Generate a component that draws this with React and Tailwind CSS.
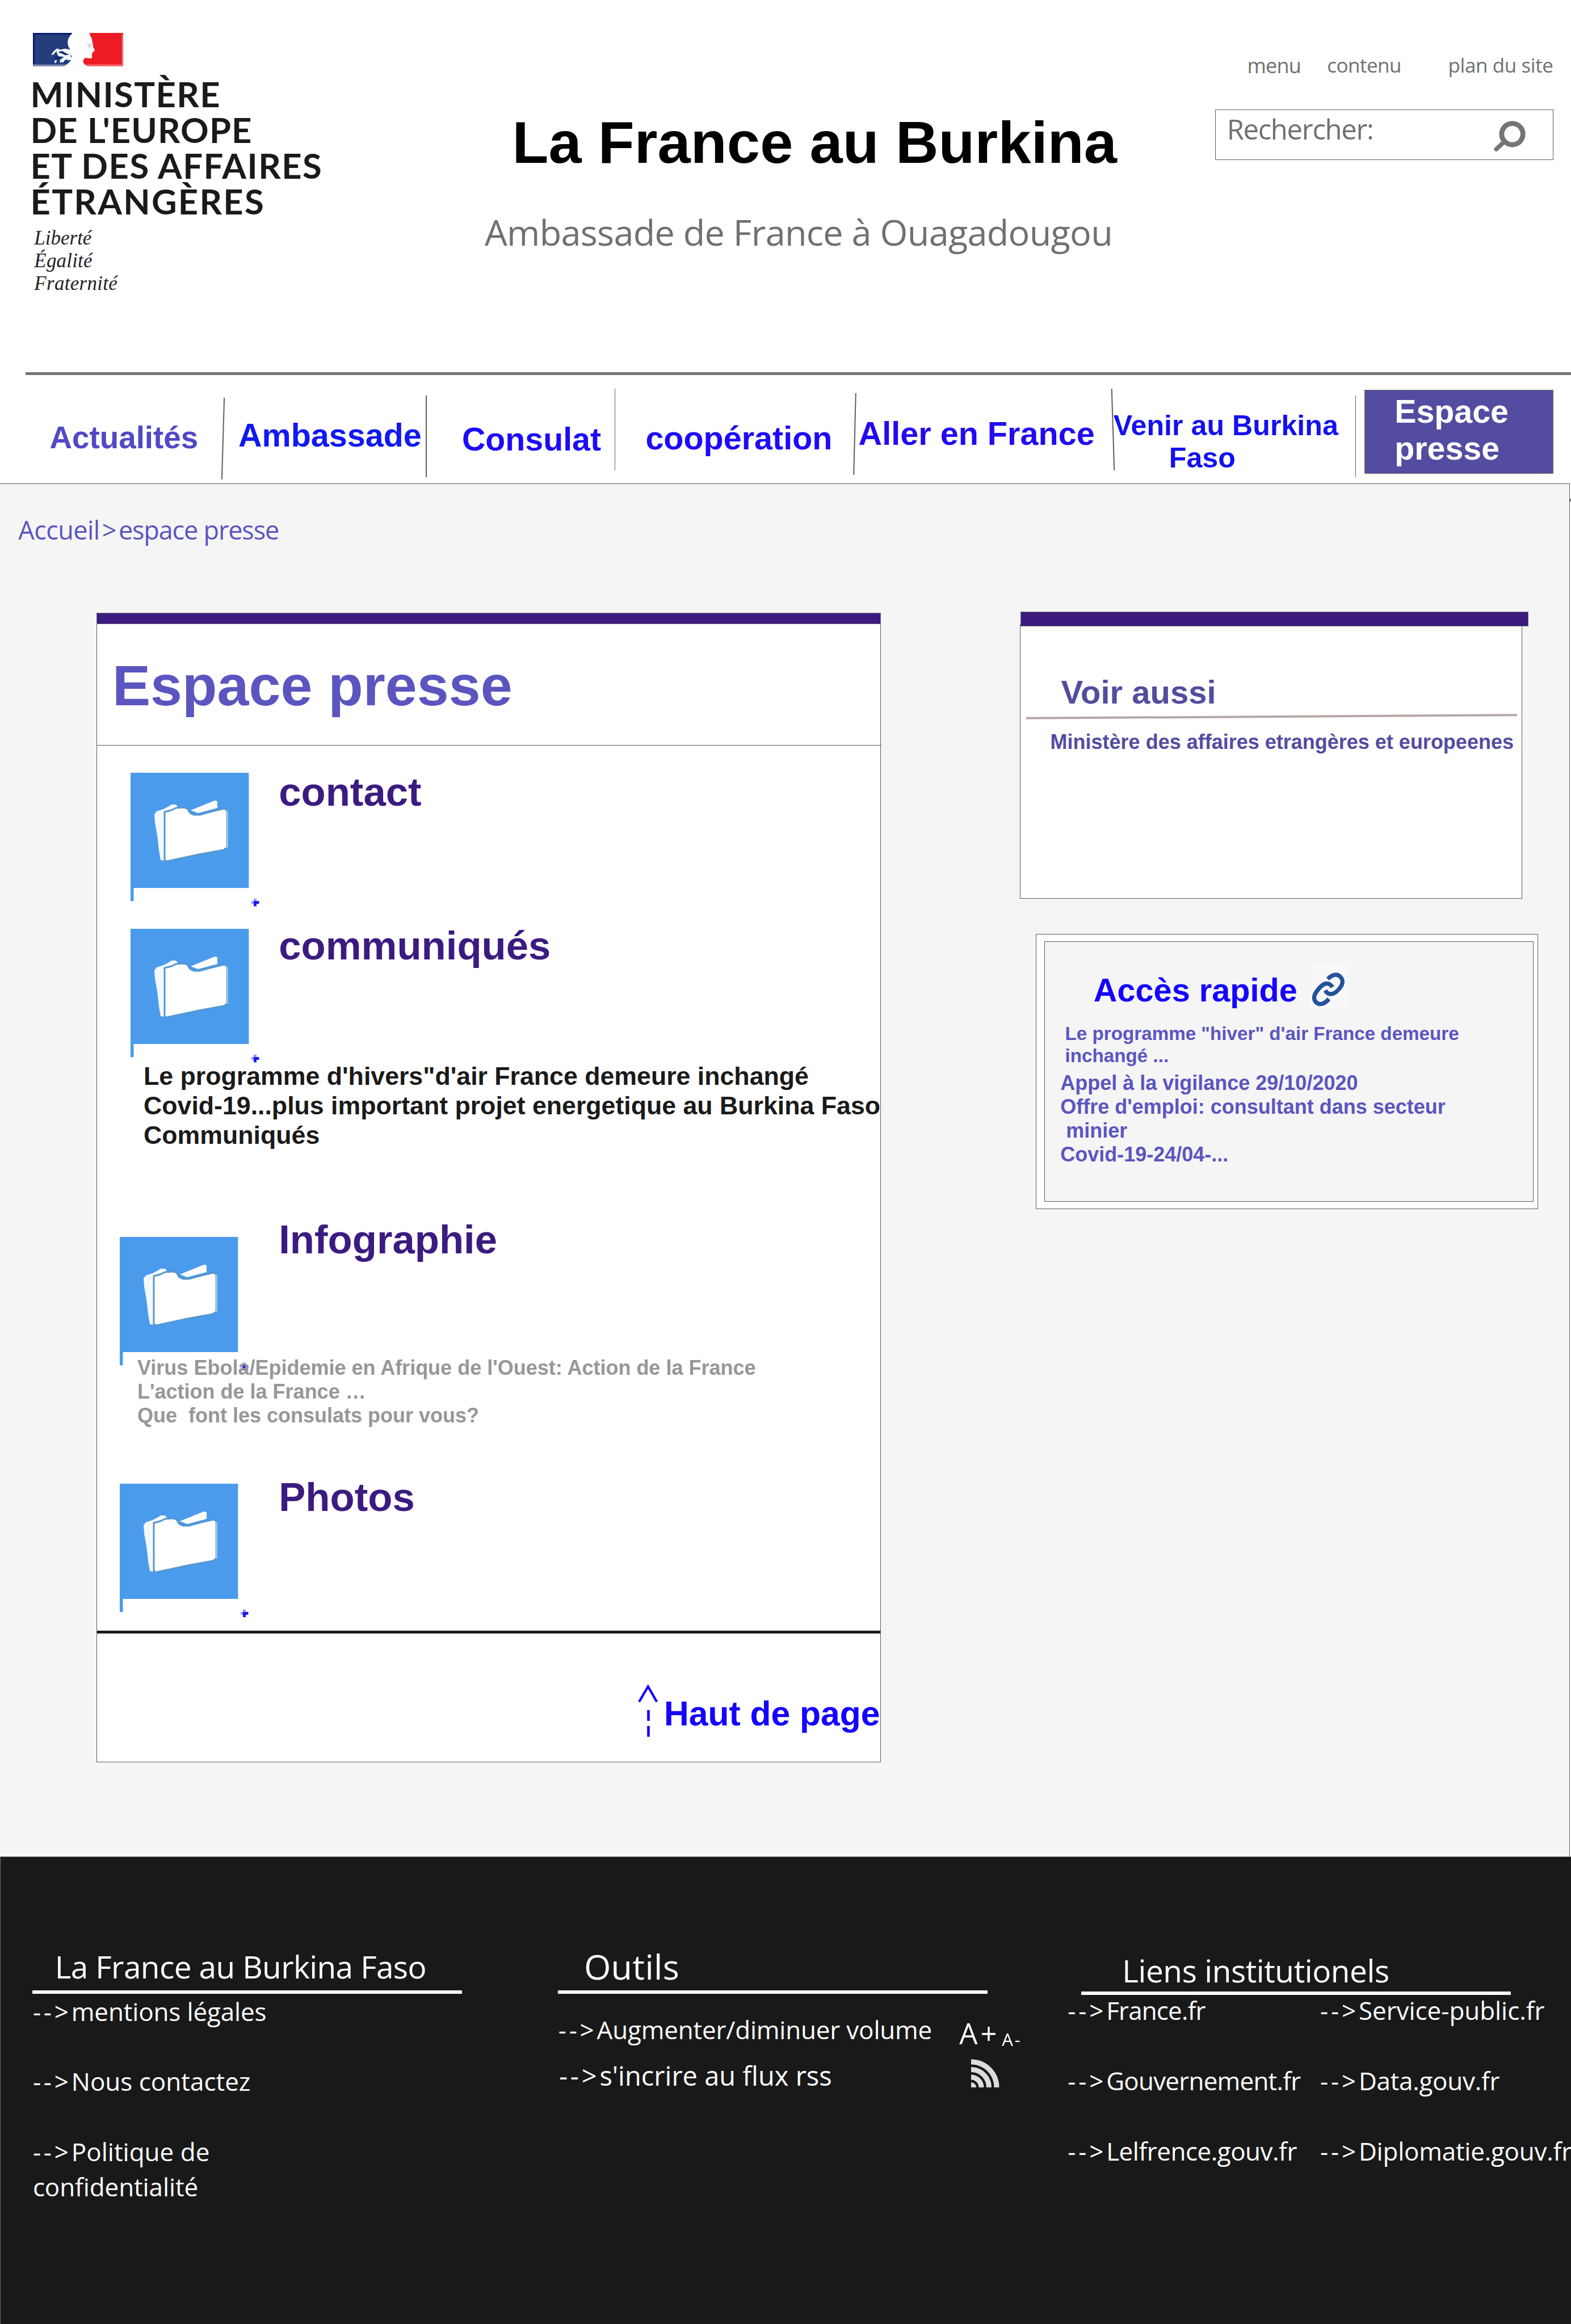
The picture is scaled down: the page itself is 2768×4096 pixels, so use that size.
import React from "react";

const SANS = "font-['Liberation_Sans',Arial,sans-serif] font-bold";
const UI = "font-['Open_Sans','Noto_Sans',sans-serif]";

function FlagLogo() {
  return (
    <svg className="block w-[159px] h-[58.4px]" viewBox="63 63 663 243" preserveAspectRatio="none">
      <path d="M63 63H352L336 84L322 108L318 130L322 160L334 180L340 215L352 245L340 268L318 290L292 306H63Z" fill="#253c7d" />
      <path d="M63 63H352L346 74H75V294H63Z" fill="#001d70" />
      <path d="M75 294H308L292 306H63V294Z" fill="#7a83ab" />
      <path d="M196 224L214 198L240 176L262 186L300 178L340 186L342 240L366 244L340 264L314 262L294 284L272 276L262 286L262 262L290 240L252 236L240 214L236 196L214 222Z" fill="#f2f3f7" />
      <path d="M256 200L280 196L300 210L330 222L300 226L276 214L252 208Z" fill="#0d2a78" />
      <path d="M222 240L256 236L290 238L256 250L240 262L224 256Z" fill="#0d2a78" />
      <path d="M226 262L240 262L232 284L220 284Z" fill="#e5e6ef" />
      <path d="M300 262L318 258L296 284L284 280Z" fill="#0d2a78" />
      <path d="M478 63H726V306H464L438 290L431 268L444 246L495 250L498 212L518 190L506 165L500 130L494 100L484 84Z" fill="#ed1c24" />
      <path d="M716 75H726V306H464L454 294H716Z" fill="#f5666b" />
      <path d="M462 144H494V158H484V172H472V156H462Z" fill="#cfcfcf" />
    </svg>
  );
}

function SearchIcon() {
  return (
    <svg className="block w-[60px] h-[60px]" viewBox="0 0 60 60">
      <circle cx="34.6" cy="26.3" r="18.7" fill="none" stroke="#757575" strokeWidth="8.8" />
      <path d="M20.5 39.5L6.3 53" stroke="#757575" strokeWidth="7.6" strokeLinecap="round" />
    </svg>
  );
}

function FolderIcon() {
  return (
    <svg className="block shrink-0 w-[228px] h-[236px]" viewBox="0 0 228 236">
      <path d="M0 0H208.4V203H5.5V226.2H0Z" fill="#4a9bec" />
      <path d="M42 73L46 68L58 64L66 60L72 56L80 56L84 61L60 68L60 155L53 154L50 136L47 110L43 88Z" fill="#f4f9fe" />
      <path d="M106 66L126 58L148 49L153 50L153 62L119 71Z" fill="#fff" />
      <path d="M60 69L72 66L80 62L94 61L100 63L105 71L112 74L122 74L140 69L165 63L170 66L170 132L164 136L120 144L64 156L60 154Z" fill="#fff" stroke="#5597cf" strokeWidth="3" strokeLinejoin="round" />
      <path d="M170.5 67V132" stroke="#a9cbea" strokeWidth="2.5" />
      <path d="M213 226h14v5h-14zM217 221.500h5v14h-5z" fill="#9c9cfa" />
      <path d="M217 226h9v5h-4v4h-5z" fill="#1a1af5" />
    </svg>
  );
}

function LinkIcon() {
  return (
    <svg className="block w-[66px] h-[79px] bg-[#f8f8f8]" viewBox="0 0 66 79">
      <g fill="none" stroke="#24529a" strokeWidth="7.4">
        <path d="M30.5 26.5C38 18.5 46 17 51.5 21.5C58 27 57.5 35 52 42C45 51 40 53 36 53C31.5 53 28.500 51 26 46.500" />
        <path d="M38.500 41C36 36 31.500 34 27 34.500C21 35.500 16 41 10 49.500C5 57 5.500 64 10.500 68C16 72.500 24 71.500 32.500 61.500" />
      </g>
    </svg>
  );
}

function RssIcon() {
  return (
    <svg className="block w-[50px] h-[50px]" viewBox="0 0 50 50">
      <g fill="none" stroke="#dcdcdc" strokeWidth="9">
        <path d="M0 5A45 45 0 0 1 45 50" />
        <path d="M0 18.500A31.500 31.500 0 0 1 31.500 50" />
        <path d="M0 32A18 18 0 0 1 18 50" />
      </g>
      <path d="M0 41A9 9 0 0 1 9 50H0Z" fill="#dcdcdc" />
    </svg>
  );
}

function UpArrow() {
  return (
    <svg className="block w-[38px] h-[92px]" viewBox="0 0 38 92">
      <path d="M4 30.500L19.800 3.500L35.300 30.500" fill="none" stroke="#1400ff" strokeWidth="4.200" />
      <path d="M20.500 45V64M20.500 73V92" stroke="#1400ff" strokeWidth="4.600" />
    </svg>
  );
}

const NAV = [
  { label: "Actualités", cell: "w-[392px] pl-[87.4px] pt-[77.6px] text-[54.8px] text-[#5049c6]", line: "mt-[40px] -skew-x-[1.7deg]" },
  { label: "Ambassade", cell: "w-[356.6px] pl-[26.5px] pt-[73.3px] text-[57.5px] text-[#1119f2]", line: "mt-[36px]" },
  { label: "Consulat", cell: "w-[331px] pl-[62.3px] pt-[80.5px] text-[57.3px] text-[#1c0af8]", line: "mt-[24px]" },
  { label: "coopération", cell: "w-[421px] pl-[53.3px] pt-[79px] text-[57.5px] text-[#1c0af8]", line: "mt-[31.6px] -skew-x-[1.43deg]" },
  { label: "Aller en France", cell: "w-[453.7px] pl-[6px] pt-[70.5px] text-[57.6px] text-[#220af0]", line: "mt-[24px] skew-x-[1.8deg]" },
];

function Header() {
  return (
    <header className="h-[852px] shrink-0 flex flex-col bg-white">
      <div className="h-[656.4px] shrink-0 flex">
        <div className="w-[854px] shrink-0 pl-[58.3px] pt-[58.4px]">
          <FlagLogo />
          <div className="mt-[17.5px] -ml-[4.8px] font-['Lato',sans-serif] font-bold text-[61.5px] leading-[62.8px] text-[#1c191a] whitespace-nowrap">
            <div className="tracking-[1.4px]">MINISTÈRE</div>
            <div className="tracking-[1.1px]">DE L'EUROPE</div>
            <div className="tracking-[1.5px]">ET DES AFFAIRES</div>
            <div className="tracking-[2.3px]">ÉTRANGÈRES</div>
          </div>
          <div className="mt-[15px] ml-[2px] font-['Liberation_Serif',serif] italic text-[35px] leading-[40px] text-[#222]">
            <div>Liberté</div>
            <div className="tracking-[0.2px]">Égalité</div>
            <div className="tracking-[0.3px]">Fraternité</div>
          </div>
        </div>
        <div className="w-[1286.5px] shrink-0 pt-[191px] whitespace-nowrap">
          <h1 className={`${SANS} ml-[48.4px] text-[104.6px] leading-[120px] tracking-[0.1px] text-black`}>La France au Burkina</h1>
          <p className={`${UI} mt-[57.6px] text-[63px] leading-[80px] tracking-[-0.73px] text-[#707070]`}>Ambassade de France à Ouagadougou</p>
        </div>
        <div className={`${UI} w-[596px] shrink-0 pt-[90.8px] text-[#707070] whitespace-nowrap`}>
          <div className="flex h-[48px] pl-[57px] text-[35px] leading-[48px]">
            <span className="w-[141px] pt-[1.4px] text-[36px] tracking-[-0.77px]">menu</span>
            <span className="w-[213.4px] tracking-[-0.56px]">contenu</span>
            <span className="tracking-[-0.41px]">plan du site</span>
          </div>
          <div className="mt-[54.1px] h-[89px] border border-[#5c5c5c] flex justify-between pl-[20.2px] pr-[46px]">
            <span className="pt-[3.4px] text-[49px] leading-[60px] tracking-[-1.35px]">Rechercher:</span>
            <span className="pt-[16px]"><SearchIcon /></span>
          </div>
        </div>
      </div>
      <div className="ml-[45.3px] h-[5px] shrink-0 bg-[#757575]" />
      <nav className={`${SANS} flex flex-1 leading-[65px] whitespace-nowrap`}>
        {NAV.map((n) => (
          <React.Fragment key={n.label}>
            <a className={`shrink-0 ${n.cell}`}>{n.label}</a>
            <span className={`shrink-0 w-[1.5px] h-[144px] bg-[#606060] ${n.line}`} />
          </React.Fragment>
        ))}
        <a className="shrink-0 w-[426px] pt-[60.2px] text-[50.2px] leading-[57.5px] text-[#1410f0]">
          Venir au Burkina
          <span className="block pl-[98px]">Faso</span>
        </a>
        <span className="shrink-0 w-[1.5px] h-[144px] mt-[36px] bg-[#606060]" />
        <a className="shrink-0 ml-[14.4px] mt-[25.2px] w-[333px] h-[148.2px] pl-[52.6px] pt-[5px] border border-[#707070] bg-[#534ca0] text-white text-[57.3px]">
          Espace
          <br />
          presse
        </a>
      </nav>
    </header>
  );
}

function Section({ title, className, iconClass, titleClass }) {
  return (
    <div className={`flex ${className}`}>
      <div className={`w-[320.2px] shrink-0 ${iconClass}`}><FolderIcon /></div>
      <h2 className={`text-[70.7px] leading-[80px] text-[#3b1b80] ${titleClass}`}>{title}</h2>
    </div>
  );
}

function PressCard() {
  return (
    <section className={`${SANS} shrink-0 mt-[1.3px] ml-[170px] w-[1382px] h-[2026.5px] border border-t-0 border-[#5c5c5c] bg-white whitespace-nowrap`}>
      <div className="-ml-px -mr-px h-[20px] border border-[#707070] bg-[#3b1b80]" />
      <div className="h-[214px] -mr-[2px] border-b border-[#5c5c5c] pl-[27px] pt-[48.3px]">
        <h1 className="text-[100.6px] leading-[120px] text-[#5b55c0]">Espace presse</h1>
      </div>
      <Section title="contact" className="h-[300.300px]" iconClass="pl-[58.8px] pt-[48.8px]" titleClass="pt-[42.7px]" />
      <Section title="communiqués" className="h-[257.2px]" iconClass="pl-[58.8px] pt-[23.5px]" titleClass="pt-[13px]" />
      <div className="pl-[82px] text-[44.7px] leading-[51.7px] tracking-[-0.01px] text-[#1a1a1a]">
        <p>Le programme d'hivers"d'air France demeure inchangé</p>
        <p>Covid-19...plus important projet energetique au Burkina Faso</p>
        <p>Communiqués</p>
      </div>
      <Section title="Infographie" className="h-[364.1px]" iconClass="pl-[39.9px] pt-[153.9px]" titleClass="pt-[118.8px]" />
      <div className="relative pl-[71px] text-[36px] leading-[42px] text-[#979797] whitespace-pre">
        <p>Virus Ebola/Epidemie en Afrique de l'Ouest: Action de la France</p>
        <p>L'action de la France …</p>
        <p>Que  font les consulats pour vous?</p>
      </div>
      <Section title="Photos" className="h-[357.8px]" iconClass="pl-[39.9px] pt-[98.2px]" titleClass="pt-[82.4px]" />
      <div className="h-[4.6px] bg-[#1a1a1a]" />
      <div className="flex pl-[950.500px] text-[60.6px] leading-[70px] text-[#1400ff]">
        <span className="pt-[90px] w-[48.500px]"><UpArrow /></span>
        <a className="pt-[106px]">Haut de page</a>
      </div>
    </section>
  );
}

function Sidebar() {
  return (
    <aside className={`${SANS} shrink-0 ml-[244.6px] w-[920px] whitespace-nowrap`}>
      <div className="relative z-10 ml-[1.3px] w-[895.2px] h-[25.4px] border border-[#707070] bg-[#3b1b80]" />
      <section className="-mt-[3.8px] w-[885px] h-[484.4px] border border-[#5c5c5c] bg-white pt-[84.5px] text-[#534ca0]">
        <h2 className="pl-[72px] text-[58px] leading-[70px]">Voir aussi</h2>
        <div className="mt-[5.3px] ml-[10px] w-[865px] h-[4px] bg-[#b5a8a8] -rotate-[0.38deg]" />
        <p className="mt-[22px] ml-[53px] text-[36px] leading-[42px]">Ministère des affaires etrangères et europeenes</p>
      </section>
      <section className="mt-[61.700px] ml-[28.9px] w-[885px] h-[485px] border border-[#5c5c5c] bg-white pl-[13.1px] pt-[11.8px] text-[#5b55c0]">
        <div className="w-[862.5px] h-[459.4px] border border-[#5c5c5c] bg-[#f5f5f5] pt-[39.2px]">
          <div className="flex pl-[86.2px]">
            <h2 className="w-[382.500px] pt-[11.4px] text-[57.7px] leading-[70px] text-[#1400ff]">Accès rapide</h2>
            <LinkIcon />
          </div>
          <p className="mt-[22.500px] ml-[36px] text-[33.2px] leading-[38.9px]">
            Le programme "hiver" d'air France demeure
            <br />
            inchangé ...
          </p>
          <div className="mt-[7.7px] ml-[27.6px] text-[36px] leading-[42px]">
            <p>Appel à la vigilance 29/10/2020</p>
            <p>Offre d'emploi: consultant dans secteur</p>
            <p className="pl-[10px]">minier</p>
            <p>Covid-19-24/04-...</p>
          </div>
        </div>
      </section>
    </aside>
  );
}

function FooterLink({ children, className = "" }) {
  return (
    <a className={`block ${className}`}>
      <span className="tracking-[4.8px]">--&gt;</span>
      {children}
    </a>
  );
}

function Footer() {
  return (
    <footer className={`${UI} flex-1 flex border-t border-l border-[#707070] bg-[#191919] pt-[158.6px] text-[44px] text-white whitespace-nowrap overflow-hidden`}>
      <div className="shrink-0 ml-[55.7px] w-[926.2px]">
        <h3 className="pl-[40px] text-[55px] leading-[70px] tracking-[-0.64px]">La France au Burkina Faso</h3>
        <div className="mt-[6.4px] w-[757px] h-[6px] bg-white" />
        <div className="mt-[1.6px] pl-[1.2px] leading-[61.8px]">
          <FooterLink className="mb-[61.400px] tracking-[-0.15px]">mentions légales</FooterLink>
          <FooterLink className="mb-[61.900px]">Nous contactez</FooterLink>
          <FooterLink>Politique de</FooterLink>
          <span className="tracking-[-0.11px]">confidentialité</span>
        </div>
      </div>
      <div className="shrink-0 w-[898.4px]">
        <h3 className="pl-[46px] text-[61px] leading-[70px] tracking-[0.3px]">Outils</h3>
        <div className="mt-[6.4px] w-[757px] h-[6px] bg-white" />
        <div className="flex h-[114px] pl-[0.8px] leading-[60px]">
          <FooterLink className="w-[706.500px] pt-[33.2px] tracking-[-0.2px]">Augmenter/diminuer volume</FooterLink>
          <span className="w-[75px] pt-[39.6px] text-[51px] tracking-[5px]">A+</span>
          <span className="pt-[60.600px] text-[31px] leading-[40px] tracking-[3px]">A-</span>
        </div>
        <div className="flex pl-[2px] text-[47px] leading-[60px]">
          <FooterLink className="w-[726.5px]">s'incrire au flux rss</FooterLink>
          <span className="pt-[1px]"><RssIcon /></span>
        </div>
      </div>
      <div className="shrink-0 pt-[7.2px]">
        <h3 className="pl-[96px] text-[55px] leading-[70px] tracking-[-0.46px]">Liens institutionels</h3>
        <div className="mt-[1.9px] ml-[23.800px] w-[757.4px] h-[6px] bg-white" />
        <div className="-mt-[3px] flex leading-[61.8px]">
          <div className="w-[444.800px] shrink-0">
            <FooterLink className="mb-[62.2px] tracking-[-0.85px]">France.fr</FooterLink>
            <FooterLink className="mb-[62.300px] tracking-[-0.8px]">Gouvernement.fr</FooterLink>
            <FooterLink className="tracking-[-0.5px]">Lelfrence.gouv.fr</FooterLink>
          </div>
          <div className="shrink-0">
            <FooterLink className="mb-[62.2px] tracking-[-0.05px]">Service-public.fr</FooterLink>
            <FooterLink className="mb-[62.300px] tracking-[-0.3px]">Data.gouv.fr</FooterLink>
            <FooterLink className="tracking-[-0.25px]">Diplomatie.gouv.fr</FooterLink>
          </div>
        </div>
      </div>
    </footer>
  );
}

export default function App() {
  return (
    <div className="w-[2768px] h-[4096px] flex flex-col overflow-hidden bg-white">
      <Header />
      <main className="relative shrink-0 w-[2766px] h-[2419.7px] border-t border-r border-[#5c5c5c] bg-[#f5f5f5]">
        <p className={`${UI} pt-[51px] pl-[32.3px] text-[45px] leading-[60px] tracking-[-0.54px] text-[#5b55c0]`}>
          Accueil
          <span className="px-[4px]">&gt;</span>
          <span className="tracking-[-1.15px]">espace presse</span>
        </p>
        <div className="mt-[114.4px] flex items-start">
          <PressCard />
          <Sidebar />
        </div>
        <span className="absolute -right-[3px] top-[26px] w-[2px] h-[5px] bg-[#707070]" />
      </main>
      <Footer />
    </div>
  );
}
